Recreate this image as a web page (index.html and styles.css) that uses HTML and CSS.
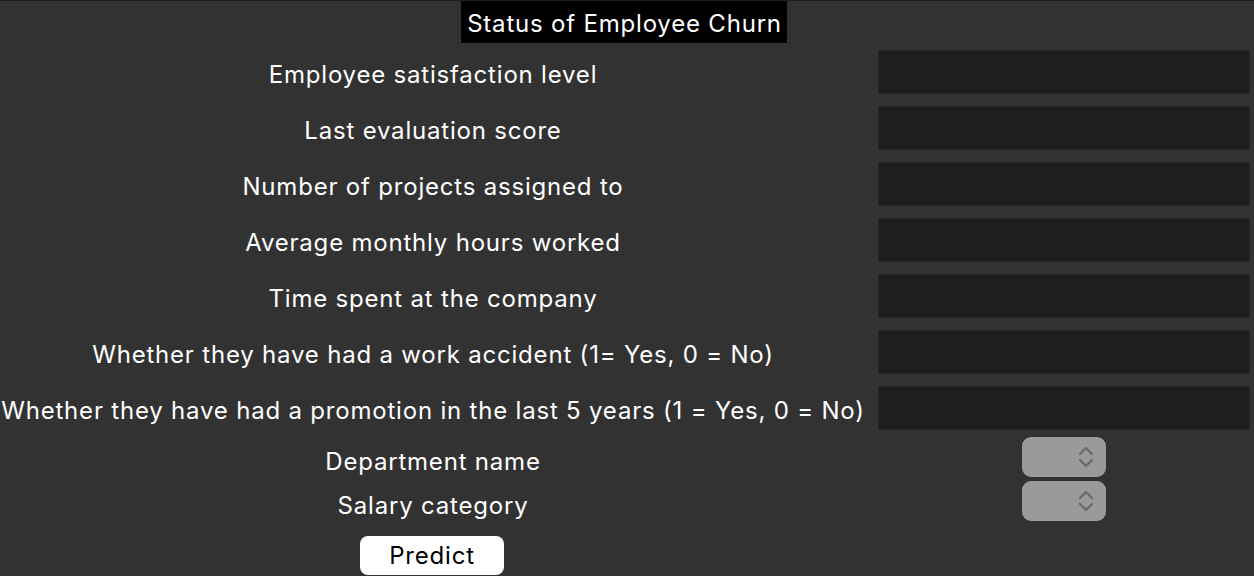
FILE: index.html
```html
<!DOCTYPE html>
<html>
<head>
<meta charset="utf-8">
<link rel="stylesheet" href="styles.css">
</head>
<body>
<div class="window">
  <div class="title-row"><span class="title">Status of Employee Churn</span></div>
  <div class="form">
    <div class="row"><div class="label">Employee satisfaction level</div><div class="entry"></div></div>
    <div class="row"><div class="label">Last evaluation score</div><div class="entry"></div></div>
    <div class="row"><div class="label">Number of projects assigned to</div><div class="entry"></div></div>
    <div class="row"><div class="label">Average monthly hours worked</div><div class="entry"></div></div>
    <div class="row"><div class="label">Time spent at the company</div><div class="entry"></div></div>
    <div class="row"><div class="label">Whether they have had a work accident (1= Yes, 0 = No)</div><div class="entry"></div></div>
    <div class="row"><div class="label">Whether they have had a promotion in the last 5 years (1 = Yes, 0 = No)</div><div class="entry"></div></div>
    <div class="row combo-row first-combo"><div class="label">Department name</div><div class="combo-cell"><div class="combo"><svg class="chev" width="16" height="24" viewBox="0 0 16 24"><path d="M2 9 L8 3 L14 9" /><path d="M2 15 L8 21 L14 15" /></svg></div></div></div>
    <div class="row combo-row"><div class="label">Salary category</div><div class="combo-cell"><div class="combo"><svg class="chev" width="16" height="24" viewBox="0 0 16 24"><path d="M2 9 L8 3 L14 9" /><path d="M2 15 L8 21 L14 15" /></svg></div></div></div>
    <div class="row button-row"><div class="btn-cell"><button class="predict">Predict</button></div><div></div></div>
  </div>
</div>
</body>
</html>
```
FILE: styles.css
```css
html, body {
  margin: 0;
  padding: 0;
  background: #323232;
}
body {
  width: 1254px;
  height: 576px;
  overflow: hidden;
  font-family: Inter, "Noto Sans", sans-serif;
  color: #ffffff;
}
.window {
  height: 575px;
  border-top: 1px solid #1c1c1c;
  background: #323232;
  border-bottom-right-radius: 12px;
}
.title-row {
  display: flex;
  justify-content: center;
}
.title {
  background: #000000;
  color: #ffffff;
  font-size: 24px;
  letter-spacing: 0.8px;
  line-height: 40px;
  height: 42px;
  padding: 3px 5px 0 6px;
  margin-right: 6px;
  box-sizing: border-box;
}
.form {
  display: flex;
  flex-direction: column;
  margin-top: 7px;
  gap: 12px;
}
.row {
  display: grid;
  grid-template-columns: 866px 1fr;
  align-items: center;
}
.label {
  text-align: center;
  font-size: 24px;
  letter-spacing: 0.8px;
  line-height: 28px;
  padding-top: 6px;
  white-space: nowrap;
}
.entry {
  margin-left: 12px;
  width: 372px;
  height: 44px;
  background: #1f1f1f;
  box-sizing: border-box;
  border: 1px solid #262626;
}
.combo-row {
  height: 40px;
}
.combo-row .label {
  padding-top: 9px;
}
.first-combo {
  margin-top: -5px;
}
.combo-row + .combo-row {
  margin-top: -8px;
}
.combo-cell {
  display: flex;
  justify-content: center;
  padding-left: 8px;
}
.combo {
  width: 84px;
  height: 40px;
  background: #9a9a9a;
  border-radius: 9px;
  display: flex;
  justify-content: flex-end;
  align-items: center;
  padding-right: 12px;
  box-sizing: border-box;
}
.chev path {
  fill: none;
  stroke: #6b6b6b;
  stroke-width: 2.4;
  stroke-linecap: round;
  stroke-linejoin: round;
}
.button-row {
  margin-top: 3px;
}
.btn-cell {
  display: flex;
  justify-content: center;
}
.predict {
  width: 144px;
  height: 39px;
  background: #ffffff;
  color: #000000;
  border: none;
  border-radius: 8px;
  font-family: Inter, "Noto Sans", sans-serif;
  font-size: 24px;
  letter-spacing: 0.8px;
  padding: 0;
  margin-left: -2px;
}
```
